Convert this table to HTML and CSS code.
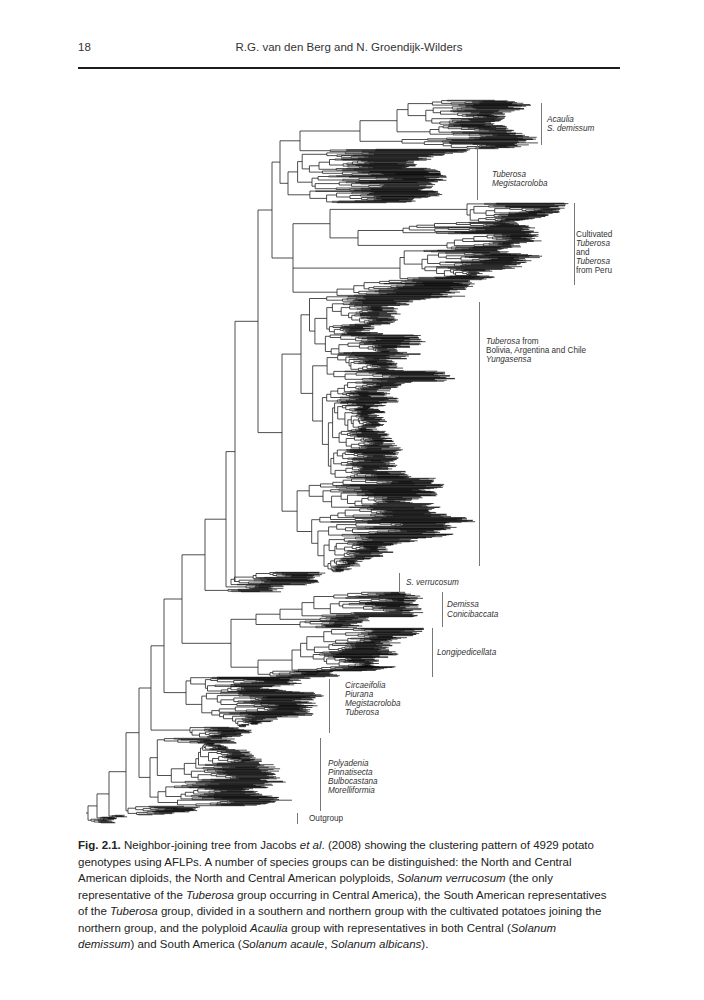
FILE: index.html
```html
<!DOCTYPE html>
<html lang="en">
<head>
<meta charset="utf-8">
<title>R.G. van den Berg and N. Groendijk-Wilders – Fig. 2.1</title>
<link rel="stylesheet" href="styles.css">
</head>
<body>
<div class="page">
  <header class="running-head">
    <span class="folio">18</span>
    <span class="authors">R.G. van den Berg and N. Groendijk-Wilders</span>
    <span></span>
  </header>
  <div class="rule"></div>

  <figure class="figure">
    <svg class="tree" width="542" height="745" viewBox="78 90 542 745" xmlns="http://www.w3.org/2000/svg">
      <path id="tree-inner" class="br-inner" d=""/>
      <path id="tree-tips" class="br-tips" d=""/>

      <g class="bars">
        <line x1="541.5" y1="103" x2="541.5" y2="145"/>
        <line x1="477.5" y1="145" x2="477.5" y2="200"/>
        <line x1="574.5" y1="203" x2="574.5" y2="285"/>
        <line x1="479.5" y1="302" x2="479.5" y2="566"/>
        <line x1="399.5" y1="573" x2="399.5" y2="593"/>
        <line x1="442.5" y1="592" x2="442.5" y2="627"/>
        <line x1="432.5" y1="628" x2="432.5" y2="677"/>
        <line x1="329.5" y1="679" x2="329.5" y2="733"/>
        <line x1="320.5" y1="738" x2="320.5" y2="811"/>
        <line x1="297.5" y1="813" x2="297.5" y2="824"/>
      </g>

      <g class="labels">
        <text class="it" x="547" y="122">Acaulia</text>
        <text class="it" x="547" y="131">S. demissum</text>

        <text class="it" x="492" y="177">Tuberosa</text>
        <text class="it" x="492" y="186">Megistacroloba</text>

        <text x="576" y="237">Cultivated</text>
        <text class="it" x="576" y="246">Tuberosa</text>
        <text x="576" y="255">and</text>
        <text class="it" x="576" y="264">Tuberosa</text>
        <text x="576" y="273">from Peru</text>

        <text x="486" y="344"><tspan class="it">Tuberosa</tspan> from</text>
        <text x="486" y="353">Bolivia, Argentina and Chile</text>
        <text class="it" x="486" y="362">Yungasensa</text>

        <text class="it" x="406" y="585">S. verrucosum</text>

        <text class="it" x="447" y="607">Demissa</text>
        <text class="it" x="447" y="617">Conicibaccata</text>

        <text class="it" x="437" y="655">Longipedicellata</text>

        <text class="it" x="345" y="688">Circaeifolia</text>
        <text class="it" x="345" y="697">Piurana</text>
        <text class="it" x="345" y="706">Megistacroloba</text>
        <text class="it" x="345" y="715">Tuberosa</text>

        <text class="it" x="328" y="766">Polyadenia</text>
        <text class="it" x="328" y="775">Pinnatisecta</text>
        <text class="it" x="328" y="784">Bulbocastana</text>
        <text class="it" x="328" y="793">Morelliformia</text>

        <text x="309" y="821">Outgroup</text>
      </g>
    </svg>

    <figcaption class="caption">
      <b>Fig. 2.1.</b> Neighbor-joining tree from Jacobs <i>et al</i>. (2008) showing the clustering pattern of 4929 potato<br>
      genotypes using AFLPs. A number of species groups can be distinguished: the North and Central<br>
      American diploids, the North and Central American polyploids, <i>Solanum verrucosum</i> (the only<br>
      representative of the <i>Tuberosa</i> group occurring in Central America), the South American representatives<br>
      of the <i>Tuberosa</i> group, divided in a southern and northern group with the cultivated potatoes joining the<br>
      northern group, and the polyploid <i>Acaulia</i> group with representatives in both Central (<i>Solanum</i><br>
      <i>demissum</i>) and South America (<i>Solanum acaule</i>, <i>Solanum albicans</i>).
    </figcaption>
  </figure>
</div>
<script src="script.js"></script>
</body>
</html>
```

FILE: styles.css
```css
html, body {
  margin: 0;
  padding: 0;
  background: #ffffff;
}

.page {
  width: 542px;
  padding: 0 84px 0 78px;
  font-family: "Liberation Sans", Arial, sans-serif;
  color: #222;
}

.running-head {
  display: grid;
  grid-template-columns: 1fr auto 1fr;
  padding-top: 40px;
  font-size: 11.5px;
  line-height: 14px;
  color: #333;
}

.folio {
  justify-self: start;
}

.rule {
  margin-top: 13px;
  border-top: 2px solid #1c1c1c;
}

.figure {
  margin: 0;
}

.tree {
  display: block;
  margin-top: 21px;
}

.br-inner {
  fill: none;
  stroke: #222;
  stroke-width: 0.8;
}

.br-tips {
  fill: none;
  stroke: #000;
  stroke-width: 0.7;
}

.bars line {
  stroke: #777;
  stroke-width: 1;
}

.labels text {
  font-family: "Liberation Sans", Arial, sans-serif;
  font-size: 8.2px;
  fill: #333;
}

.labels .it {
  font-style: italic;
}

.caption {
  margin-top: 2px;
  font-size: 11.5px;
  line-height: 16.5px;
  white-space: nowrap;
  color: #222;
}
```

FILE: script.js
```js
(function () {
  var seed = 20080917;
  function rnd() {
    seed = (seed + 0x6D2B79F5) | 0;
    var t = Math.imul(seed ^ (seed >>> 15), 1 | seed);
    t = (t + Math.imul(t ^ (t >>> 7), 61 | t)) ^ t;
    return ((t ^ (t >>> 14)) >>> 0) / 4294967296;
  }
  function R(a, b) { return a + (b - a) * rnd(); }

  var inner = [], tips = [];
  function n(v) { return Math.round(v * 10) / 10; }
  function hl(x1, x2, y, arr) {
    if (x2 - x1 > 0.05) arr.push('M' + n(x1) + ' ' + n(y) + 'H' + n(x2));
  }
  function vl(x, y1, y2) { inner.push('M' + n(x) + ' ' + n(y1) + 'V' + n(y2)); }

  var BIAS = 6;
  function envF(pts) {
    if (typeof pts === 'number') return function () { return pts + BIAS; };
    return function (y) {
      if (y <= pts[0][0]) return pts[0][1] + BIAS;
      for (var i = 1; i < pts.length; i++) {
        if (y <= pts[i][0]) {
          var a = pts[i - 1], b = pts[i];
          return a[1] + (b[1] - a[1]) * (y - a[0]) / (b[0] - a[0]) + BIAS;
        }
      }
      return pts[pts.length - 1][1] + BIAS;
    };
  }

  var TIP = 0.48;

  /* opt: env function, sp (reach spread), bf (max branch fraction) */
  function gen(y0, y1, xp, x, opt, off, depth) {
    var h = y1 - y0;
    if (h < TIP * 1.5 || depth > 80) {
      var yt = (y0 + y1) / 2;
      var xe = opt.env(yt) - off - Math.pow(rnd(), 2) * 22;
      if (xe < x + 6) xe = x + 6;
      hl(xp, xe, yt, tips);
      return yt;
    }
    var f;
    if (h < 2.5) f = R(0.35, 0.65);
    else f = rnd() < 0.5 ? R(0.06, 0.42) : R(0.58, 0.94);
    var ym = y0 + h * f;
    var parts = [[y0, ym], [ym, y1]];
    var ys = [];
    for (var i = 0; i < 2; i++) {
      var a = parts[i][0], b = parts[i][1], hc = b - a, yc = (a + b) / 2;
      var e = opt.env(yc);
      var o = off + Math.pow(rnd(), 2.5) * opt.sp * Math.min(1, hc / 10);
      var span = e - x;
      var lim = e - x - Math.max(12, span * 0.4);
      if (o > lim) o = Math.max(off, lim);
      var rem = Math.max(0, e - o - x);
      var frac = hc > 8 ? R(0.02, opt.bf) : R(0.04, opt.bf * 1.5);
      var cx = x + rem * frac;
      ys.push(gen(a, b, x, cx, opt, o, depth + 1));
    }
    vl(x, ys[0], ys[1]);
    var y = (ys[0] + ys[1]) / 2;
    hl(xp, x, y, inner);
    return y;
  }

  function build(s, xp) {
    if (s.t) {
      return gen(s.t[0], s.t[1], xp, s.xs,
        { env: envF(s.env), sp: s.sp || 12, bf: s.bf || 0.18 }, 0, 0);
    }
    var ys = s.c.map(function (c) { return build(c, s.x); });
    var y = (ys[0] + ys[ys.length - 1]) / 2;
    if (ys.length > 1) vl(s.x, Math.min.apply(null, ys), Math.max.apply(null, ys));
    hl(xp, s.x, y, inner);
    return y;
  }

  function T(y0, y1, xs, env, sp, bf) { return { t: [y0, y1], xs: xs, env: env, sp: sp, bf: bf }; }
  function N(x, c) { return { x: x, c: c }; }

  var ACA = N(300, [
    N(360, [
      N(397, [
        T(100, 125, 408, [[100, 505], [104, 528], [110, 522], [118, 512], [125, 500]], 12, 0.18),
        T(125, 137, 430, [[125, 505], [131, 522], [137, 526]], 10, 0.18)
      ]),
      T(137, 149, 402, [[137, 532], [141, 538], [146, 530], [149, 505]], 10, 0.18)
    ]),
    T(149, 152, 330, 472, 6, 0.15)
  ]);
  var TUB = T(152, 203, 288, [[152, 472], [158, 442], [165, 428], [172, 448], [180, 452], [188, 440], [195, 455], [200, 432], [203, 405]], 16, 0.14);
  var CULT = N(293, [
    N(330, [
      T(203, 222, 467, [[203, 562], [207, 574], [212, 566], [218, 545], [222, 520]], 10, 0.16),
      N(358, [
        T(222, 234, 403, [[222, 522], [228, 544], [234, 534]], 10, 0.18),
        T(234, 250, 447, [[234, 546], [240, 547], [246, 524], [250, 502]], 10, 0.18)
      ])
    ]),
    N(350, [T(250, 280, 400, [[250, 505], [256, 557], [262, 546], [268, 524], [274, 506], [280, 484]], 14, 0.16)]),
    T(280, 296, 337, [[280, 474], [286, 486], [292, 464], [296, 442]], 10, 0.12)
  ]);
  var BOL = T(296, 572, 282, [[296, 492], [300, 434], [310, 424], [320, 434], [330, 414], [340, 444], [345, 448], [355, 424], [365, 444], [375, 462], [380, 465], [390, 434], [400, 424], [410, 424], [420, 444], [430, 434], [440, 438], [450, 448], [460, 443], [470, 438], [480, 448], [490, 443], [500, 458], [510, 443], [520, 472], [527, 484], [535, 464], [545, 424], [555, 414], [565, 384], [572, 362]], 18, 0.12);

  var TOP = N(272, [N(280, [ACA, TUB]), CULT]);
  var TOPN = N(258, [TOP, BOL]);

  var VerrA = T(572, 585, 231, [[572, 324], [577, 314], [582, 320], [585, 300]], 8, 0.16);
  var VerrB = T(585, 589, 246, 278, 5, 0.18);
  var Tiny1 = T(589, 592, 228, 276, 4, 0.18);

  var DEM = N(256, [
    N(280, [
      T(592, 617, 302, [[592, 407], [597, 426], [603, 417], [609, 430], [614, 420], [617, 407]], 10, 0.18),
      T(617, 621, 320, 364, 6, 0.18)
    ]),
    T(621, 628, 300, 357, 8, 0.18)
  ]);
  var LONG = N(258, [
    T(628, 671, 292, [[628, 432], [632, 430], [640, 414], [650, 408], [660, 402], [667, 397], [671, 372]], 12, 0.16),
    T(671, 677, 270, 334, 8, 0.18)
  ]);
  var LD = N(231, [DEM, LONG]);

  var CIRC = T(677, 727, 186, [[677, 302], [682, 320], [688, 298], [694, 322], [700, 318], [708, 322], [716, 312], [722, 294], [727, 257]], 14, 0.14);
  var T727 = T(727, 738, 190, [[727, 242], [732, 250], [738, 232]], 8, 0.18);
  var POLY = T(738, 806, 150, [[738, 237], [745, 252], [752, 278], [758, 289], [765, 294], [772, 302], [778, 312], [784, 288], [790, 274], [796, 294], [802, 288], [806, 254]], 14, 0.14);
  var BOT = T(806, 815, 128, [[806, 198], [811, 194], [815, 152]], 8, 0.16);

  var B9 = N(235, [TOPN, VerrA]);
  var B8 = N(226, [B9, VerrB]);
  var B7 = N(205, [B8, Tiny1]);
  var B6 = N(182, [B7, LD]);
  var B5 = N(164, [B6, CIRC]);
  var B4 = N(151, [B5, T727]);
  var B3 = N(139, [B4, POLY]);
  var B2 = N(126, [B3, BOT]);
  var B1 = N(109, [B2, T(815, 817, 112, 122, 2, 0.2)]);
  var B0 = N(97, [B1, T(817, 819, 100, 112, 2, 0.2)]);
  var ROOT = N(88, [B0, T(819, 823, 91, 110, 3, 0.2)]);

  build(ROOT, 86);

  document.getElementById('tree-inner').setAttribute('d', inner.join(''));
  document.getElementById('tree-tips').setAttribute('d', tips.join(''));
})();
```
